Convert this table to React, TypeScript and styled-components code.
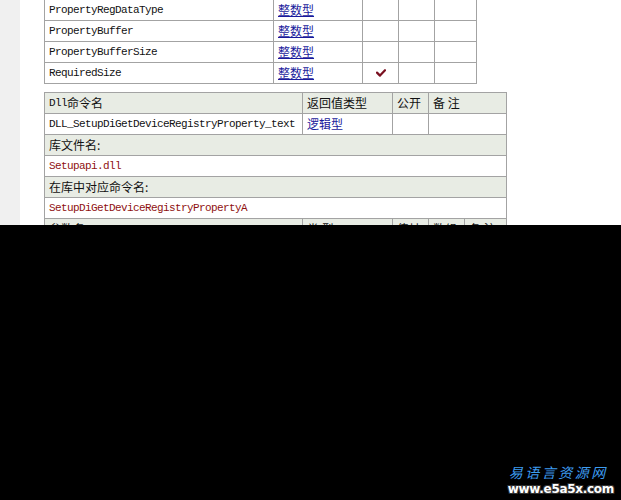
import React from "react";
import styled, { createGlobalStyle } from "styled-components";

const Global = createGlobalStyle`
  html, body { margin: 0; padding: 0; background: #000; }
  #root { width: 621px; height: 500px; overflow: hidden; }
`;

const Page = styled.div`
  width: 621px;
  height: 500px;
  display: flex;
  flex-direction: column;
  background: #000;
`;

const Screen = styled.div`
  height: 225px;
  display: flex;
  overflow: hidden;
  background: #fff;
  flex: none;
`;

const Gutter = styled.div`
  width: 20px;
  flex: none;
  background: #f0f0f0;
`;

const Content = styled.div`
  flex: 1;
  padding-left: 24px;
  margin-top: -1px;
  display: flex;
  flex-direction: column;
  gap: 8px;
`;

const Grid = styled.table<{ $w: number }>`
  width: ${(p) => p.$w}px;
  border-collapse: collapse;
  table-layout: fixed;
  flex: none;
`;

const Cell = styled.td<{ $head?: boolean }>`
  height: 20px;
  padding: 0;
  border: 1px solid #a3a3a3;
  background: ${(p) => (p.$head ? "#e8ece4" : "#fff")};
  vertical-align: middle;
  box-sizing: border-box;
`;

const Box = styled.div<{ $pad?: number; $center?: boolean }>`
  height: 20px;
  display: flex;
  align-items: center;
  justify-content: ${(p) => (p.$center ? "center" : "flex-start")};
  padding-left: ${(p) => p.$pad ?? 4}px;
  overflow: hidden;
  white-space: nowrap;
  font-family: "Liberation Mono", "Noto Sans CJK SC", monospace;
  font-size: 11px;
  letter-spacing: -0.6px;
  line-height: 1;
  color: #111;
`;

const Han = styled.span`
  font-family: "Noto Sans CJK SC", sans-serif;
  font-size: 12px;
  letter-spacing: 0;
  line-height: 1;
`;

const TypeLink = styled.span<{ $under?: boolean }>`
  font-family: "Noto Sans CJK SC", sans-serif;
  font-size: 12px;
  letter-spacing: 0;
  line-height: 1;
  color: #1a1a9c;
  text-decoration: ${(p) => (p.$under ? "underline" : "none")};
  text-underline-offset: 1px;
`;

const Lib = styled.span`
  color: #8f1010;
`;

const Dark = styled.div`
  flex: 1;
  position: relative;
  background: #000;
`;

const Watermark = styled.div`
  position: absolute;
  right: 7px;
  bottom: 4px;
  display: flex;
  flex-direction: column;
  align-items: flex-start;
  gap: 1px;
`;

const MarkCn = styled.div`
  font-family: "Noto Sans CJK SC", sans-serif;
  font-size: 14px;
  letter-spacing: 2.5px;
  color: #3d9cf0;
  line-height: 18px;
  padding-left: 1px;
  font-style: italic;
`;

const MarkUrl = styled.div`
  font-family: "DejaVu Sans", sans-serif;
  font-weight: bold;
  font-size: 12px;
  letter-spacing: -0.3px;
  line-height: 14px;
  color: #fff;
  text-shadow: -1px -1px 0 #333, 1px -1px 0 #333, -1px 1px 0 #333, 1px 1px 0 #333;
`;

const Check = () => (
  <svg width="10" height="8" viewBox="0 0 10 8">
    <path d="M1 3.6 L4 6.6 L9 1.2" stroke="#7a1020" strokeWidth="2.2" fill="none" strokeLinecap="round" strokeLinejoin="round" />
  </svg>
);

const params = [
  { name: "PropertyRegDataType", check: false },
  { name: "PropertyBuffer", check: false },
  { name: "PropertyBufferSize", check: false },
  { name: "RequiredSize", check: true },
];

export default function App() {
  return (
    <Page>
      <Global />
      <Screen>
        <Gutter />
        <Content>
          <Grid $w={432}>
            <colgroup>
              <col style={{ width: 229 }} />
              <col style={{ width: 89 }} />
              <col style={{ width: 36 }} />
              <col style={{ width: 36 }} />
              <col style={{ width: 42 }} />
            </colgroup>
            <tbody>
              {params.map((p) => (
                <tr key={p.name}>
                  <Cell><Box>{p.name}</Box></Cell>
                  <Cell><Box><TypeLink $under>整数型</TypeLink></Box></Cell>
                  <Cell><Box $pad={0} $center>{p.check ? <Check /> : null}</Box></Cell>
                  <Cell><Box /></Cell>
                  <Cell><Box /></Cell>
                </tr>
              ))}
            </tbody>
          </Grid>
          <Grid $w={462}>
            <colgroup>
              <col style={{ width: 258 }} />
              <col style={{ width: 90 }} />
              <col style={{ width: 36 }} />
              <col style={{ width: 36 }} />
              <col style={{ width: 42 }} />
            </colgroup>
            <tbody>
              <tr>
                <Cell $head><Box>Dll<Han>命令名</Han></Box></Cell>
                <Cell $head><Box><Han>返回值类型</Han></Box></Cell>
                <Cell $head><Box><Han>公开</Han></Box></Cell>
                <Cell $head colSpan={2}><Box><Han>备 注</Han></Box></Cell>
              </tr>
              <tr>
                <Cell><Box>DLL_SetupDiGetDeviceRegistryProperty_text</Box></Cell>
                <Cell><Box><TypeLink>逻辑型</TypeLink></Box></Cell>
                <Cell><Box /></Cell>
                <Cell colSpan={2}><Box /></Cell>
              </tr>
              <tr>
                <Cell $head colSpan={5}><Box><Han>库文件名:</Han></Box></Cell>
              </tr>
              <tr>
                <Cell colSpan={5}><Box><Lib>Setupapi.dll</Lib></Box></Cell>
              </tr>
              <tr>
                <Cell $head colSpan={5}><Box><Han>在库中对应命令名:</Han></Box></Cell>
              </tr>
              <tr>
                <Cell colSpan={5}><Box><Lib>SetupDiGetDeviceRegistryPropertyA</Lib></Box></Cell>
              </tr>
              <tr>
                <Cell $head><Box><Han>参数名</Han></Box></Cell>
                <Cell $head><Box><Han>类 型</Han></Box></Cell>
                <Cell $head><Box><Han>传址</Han></Box></Cell>
                <Cell $head><Box><Han>数组</Han></Box></Cell>
                <Cell $head><Box><Han>备 注</Han></Box></Cell>
              </tr>
            </tbody>
          </Grid>
        </Content>
      </Screen>
      <Dark>
        <Watermark>
          <MarkCn>易语言资源网</MarkCn>
          <MarkUrl>www.e5a5x.com</MarkUrl>
        </Watermark>
      </Dark>
    </Page>
  );
}
